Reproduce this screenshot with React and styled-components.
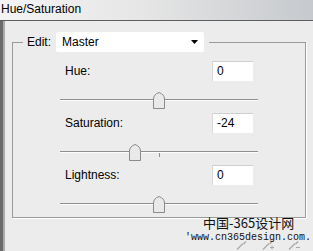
import React from 'react';
import styled, { createGlobalStyle } from 'styled-components';

const GlobalStyle = createGlobalStyle`
  html, body {
    margin: 0;
    padding: 0;
    background: #ececec;
  }
  body {
    font-family: "Liberation Sans", Arial, sans-serif;
    font-size: 12px;
    color: #000;
  }
`;

const Window = styled.div`
  position: relative;
  width: 313px;
  height: 251px;
  overflow: hidden;
  display: flex;
  flex-direction: column;
  background: #ececec;
`;

const TitleBar = styled.div`
  height: 20px;
  line-height: 19px;
  padding-left: 1px;
  border-bottom: 1px solid #5e5e5e;
  background: linear-gradient(to right, #f4f4f4 0%, #e6e6e6 45%, #c6c9cd 100%);
`;

const Body = styled.div`
  flex: 1;
  border-left: 3px solid #6a6a6a;
  box-shadow: inset 2px 0 0 #a9a9a9;
  padding: 11px 0 0 9px;
`;

const Group = styled.fieldset`
  margin: 0;
  width: 294px;
  box-sizing: border-box;
  padding: 9px 0 0 0;
  border: 1px solid #9a9a9a;
  box-shadow: 1px 1px 0 #fff;
`;

const Legend = styled.legend`
  margin-left: 10px;
  padding: 0 5px 0 4px;
  display: flex;
  align-items: center;
  gap: 5px;
`;

const Dropdown = styled.div`
  width: 148px;
  height: 20px;
  box-sizing: border-box;
  background: #fff;
  border-radius: 2px;
  padding: 0 6px 0 6px;
  display: flex;
  align-items: center;
  justify-content: space-between;
`;

const Params = styled.div`
  margin-left: 47px;
  width: 198px;
`;

const Param = styled.div`
  height: 52px;
  display: flex;
  flex-direction: column;
`;

const Row = styled.div`
  display: flex;
  align-items: center;
  height: 20px;
  padding: 0 5px;
`;

const Label = styled.span`
  flex: 1;
`;

const ValueBox = styled.div`
  width: 41px;
  height: 20px;
  box-sizing: border-box;
  background: #fff;
  border-top: 1px solid #cfcfcf;
  border-left: 1px solid #d9d9d9;
  padding-left: 4px;
  line-height: 19px;
`;

const Slider = styled.div`
  position: relative;
  height: 17px;
  margin-top: 11px;
`;

const Track = styled.div`
  margin-top: 7px;
  height: 1px;
  background: #8f8f8f;
  border-bottom: 1px solid #fdfdfd;
`;

const Tick = styled.div`
  position: absolute;
  left: 99px;
  top: 9px;
  width: 1px;
  height: 4px;
  background: #8f8f8f;
`;

const Thumb = styled.svg`
  position: absolute;
  top: 0;
  width: 12px;
  height: 17px;
`;

const Tools = styled.div`
  display: flex;
  justify-content: flex-end;
  gap: 13px;
  padding: 22px 12px 0 0;
`;

const Watermark = styled.div`
  position: absolute;
  left: ${(p) => p.$left}px;
  top: ${(p) => p.$top}px;
  height: ${(p) => p.$size}px;
  font-family: ${(p) => (p.$mono ? '"Liberation Mono", "Courier New", monospace' : '"Noto Sans CJK SC", sans-serif')};
  font-size: ${(p) => p.$size}px;
  line-height: ${(p) => p.$size}px;
  white-space: nowrap;
  color: #111;
`;

const params = [
  { name: 'Hue:', value: 0, max: 180 },
  { name: 'Saturation:', value: -24, max: 100 },
  { name: 'Lightness:', value: 0, max: 100 },
];

function Eyedropper({ sign }) {
  return (
    <svg width="13" height="10" viewBox="0 0 13 10">
      <path d="M1 9.5 L7 3.5" stroke="#a9a9a9" strokeWidth="1.2" fill="none" />
      <path d="M7 3.5 L9.5 1 L10.5 2 L8 4.5 Z" fill="#a9a9a9" />
      {sign === '+' && <path d="M8 7.5 H12 M10 5.5 V9.5" stroke="#a9a9a9" strokeWidth="1" />}
      {sign === '-' && <path d="M8 7.5 H12" stroke="#a9a9a9" strokeWidth="1" />}
    </svg>
  );
}

export default function App() {
  return (
    <Window>
      <GlobalStyle />
      <TitleBar>Hue/Saturation</TitleBar>
      <Body>
        <Group>
          <Legend>
            Edit:
            <Dropdown>
              Master
              <svg width="7" height="4" viewBox="0 0 7 4">
                <path d="M0 0 H7 L3.5 4 Z" fill="#000" />
              </svg>
            </Dropdown>
          </Legend>
          <Params>
            {params.map((p) => (
              <Param key={p.name}>
                <Row>
                  <Label>{p.name}</Label>
                  <ValueBox>{p.value}</ValueBox>
                </Row>
                <Slider>
                  <Track />
                  <Tick />
                  <Thumb
                    viewBox="0 0 12 17"
                    style={{ left: 99 + (p.value / p.max) * 99 - 6 }}
                  >
                    <path
                      d="M0.5 16.5 V7 Q0.5 2.5 6 0.5 Q11.5 2.5 11.5 7 V16.5 Z"
                      fill="#e9e9e9"
                      stroke="#8a8a8a"
                    />
                  </Thumb>
                </Slider>
              </Param>
            ))}
          </Params>
        </Group>
        <Tools>
          <Eyedropper />
          <Eyedropper sign="+" />
          <Eyedropper sign="-" />
        </Tools>
      </Body>
      <Watermark $left={203} $top={216} $size={13}>中国-365设计网</Watermark>
      <Watermark $left={185} $top={233} $size={10} $mono>'www.cn365design.com.</Watermark>
    </Window>
  );
}
